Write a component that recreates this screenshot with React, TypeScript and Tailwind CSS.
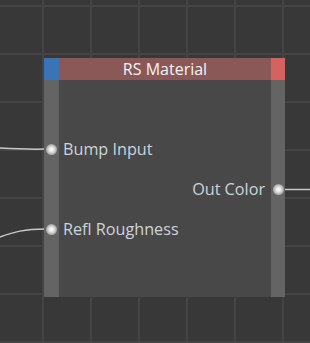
const font = { fontFamily: '"Open Sans", "Noto Sans", sans-serif' };

function Port() {
  return (
    <div className="w-[11px] h-[11px] shrink-0 rounded-full bg-[radial-gradient(circle,#ffffff_0%,#e6e6e6_30%,#9a9a9a_75%,#7a7a7a_100%)]" />
  );
}

export default function App() {
  return (
    <div
      className="relative w-[310px] h-[343px] overflow-hidden bg-[#383838] bg-[linear-gradient(to_right,#444444_2px,transparent_2px),linear-gradient(to_bottom,#444444_2px,transparent_2px)] bg-[size:48px_48px] bg-[position:42px_5px]"
      style={font}
    >
      {/* wires */}
      <svg className="absolute inset-0" width="310" height="343">
        <path d="M0 148 C 18 149, 28 149.5, 46 149" stroke="#c9c9c9" strokeWidth="1.5" fill="none" />
        <path d="M0 237 C 14 232, 24 229, 46 229" stroke="#c9c9c9" strokeWidth="1.5" fill="none" />
        <path d="M282 189.5 L310 189.5" stroke="#c9c9c9" strokeWidth="1.5" fill="none" />
      </svg>

      {/* node */}
      <div className="absolute left-[44px] top-[58px] w-[241px] h-[239px] flex flex-col">
        <div className="flex h-[22px]">
          <div className="w-[15px] bg-[#3b73b8]" />
          <div className="flex-1 bg-[#8a5957] text-[#f4f4f4] text-[16px] leading-[22px] text-center">
            RS Material
          </div>
          <div className="w-[14px] bg-[#d4625f]" />
        </div>
        <div className="flex-1 bg-[#484848] border-l-[15px] border-r-[14px] border-[#646464] pt-[49px] text-[16.2px] text-[#cdd4da]">
          <div className="flex items-center h-10 -ml-[15px]">
            <div className="w-[15px] flex justify-center">
              <Port />
            </div>
            <span className="ml-[4px]">Bump Input</span>
          </div>
          <div className="flex items-center justify-end h-10 -mr-[14px]">
            <span className="mr-[6px]">Out Color</span>
            <div className="w-[14px] flex justify-center">
              <Port />
            </div>
          </div>
          <div className="flex items-center h-10 -ml-[15px]">
            <div className="w-[15px] flex justify-center">
              <Port />
            </div>
            <span className="ml-[4px]">Refl Roughness</span>
          </div>
        </div>
      </div>
    </div>
  );
}
